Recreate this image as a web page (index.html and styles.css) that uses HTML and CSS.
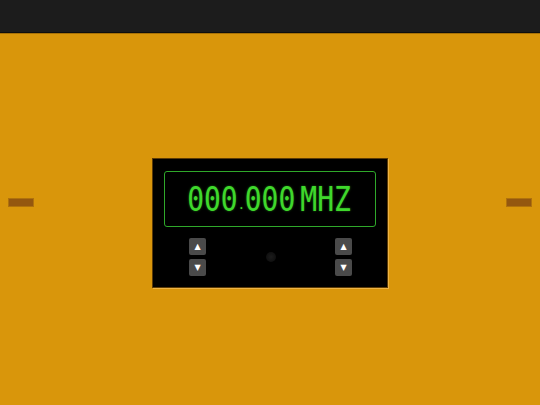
FILE: index.html
```html
<!DOCTYPE html>
<html lang="en">

<head>
    <meta charset="UTF-8">
    <meta name="viewport" content="width=device-width, initial-scale=1.0">
    <title>Tuner</title>
    <link rel="stylesheet" href="styles.css">
</head>

<body>
    <div class="topbar"></div>

    <div class="stage">
        <div class="side-tab"></div>

        <div class="radio">
            <div class="display">
                <span class="digits">000</span><span class="dot">.</span><span class="digits">000</span>
                <span class="unit">MHZ</span>
            </div>
            <div class="controls">
                <div class="stepper">
                    <button class="step">&#9650;</button>
                    <button class="step">&#9660;</button>
                </div>
                <div class="led"></div>
                <div class="stepper">
                    <button class="step">&#9650;</button>
                    <button class="step">&#9660;</button>
                </div>
            </div>
        </div>

        <div class="side-tab"></div>
    </div>
</body>

</html>
```

FILE: styles.css
```css
body, html {
    margin: 0;
    padding: 0;
    height: 100%;
    overflow: hidden;
    background-color: #d9960b;
    font-family: "DejaVu Sans Mono", monospace;
}

.topbar {
    height: 32px;
    background-color: #1c1c1c;
    border-bottom: 1px solid #0e0e0e;
    box-shadow: 0 1px 0 rgba(80, 50, 0, 0.35);
}

.stage {
    display: flex;
    justify-content: space-between;
    align-items: flex-start;
    padding: 125px 8px 0;
}

.side-tab {
    width: 24px;
    height: 7px;
    margin-top: 40px;
    background-color: #94570f;
    border: 1px solid #b0720c;
}

.radio {
    width: 212px;
    height: 116px;
    padding: 12px 11px 0;
    background-color: #000;
    border: 1px solid #5c3b05;
    box-shadow: 1px 1px 0 #edb445;
}

/* frequency readout */
.display {
    height: 56px;
    border: 1px solid #2fa82a;
    border-radius: 3px;
    display: flex;
    justify-content: center;
    align-items: baseline;
    padding: 2px 2px 0 0;
    box-sizing: border-box;
    color: #3fd82c;
    font-size: 28px;
    line-height: 51px;
    text-shadow: 0 0 2px rgba(60, 220, 40, 0.5);
}

.digits, .unit {
    display: inline-block;
    transform: scaleY(1.2);
}

.dot {
    font-size: 12px;
    width: 7px;
    text-align: center;
}

.unit {
    margin-left: 5px;
}

.controls {
    display: flex;
    justify-content: space-between;
    align-items: center;
    padding: 11px 24px 0 25px;
}

.stepper {
    display: flex;
    flex-direction: column;
    gap: 4px;
}

.step {
    width: 17px;
    height: 17px;
    padding: 0;
    border: none;
    border-radius: 2px;
    background-color: #4a4a4a;
    color: #fff;
    font-family: "DejaVu Sans", sans-serif;
    font-size: 8px;
    line-height: 17px;
    cursor: pointer;
}

.led {
    width: 10px;
    height: 10px;
    border-radius: 50%;
    background: radial-gradient(circle, #1c1c1c 0%, #0a0a0a 100%);
}
```
